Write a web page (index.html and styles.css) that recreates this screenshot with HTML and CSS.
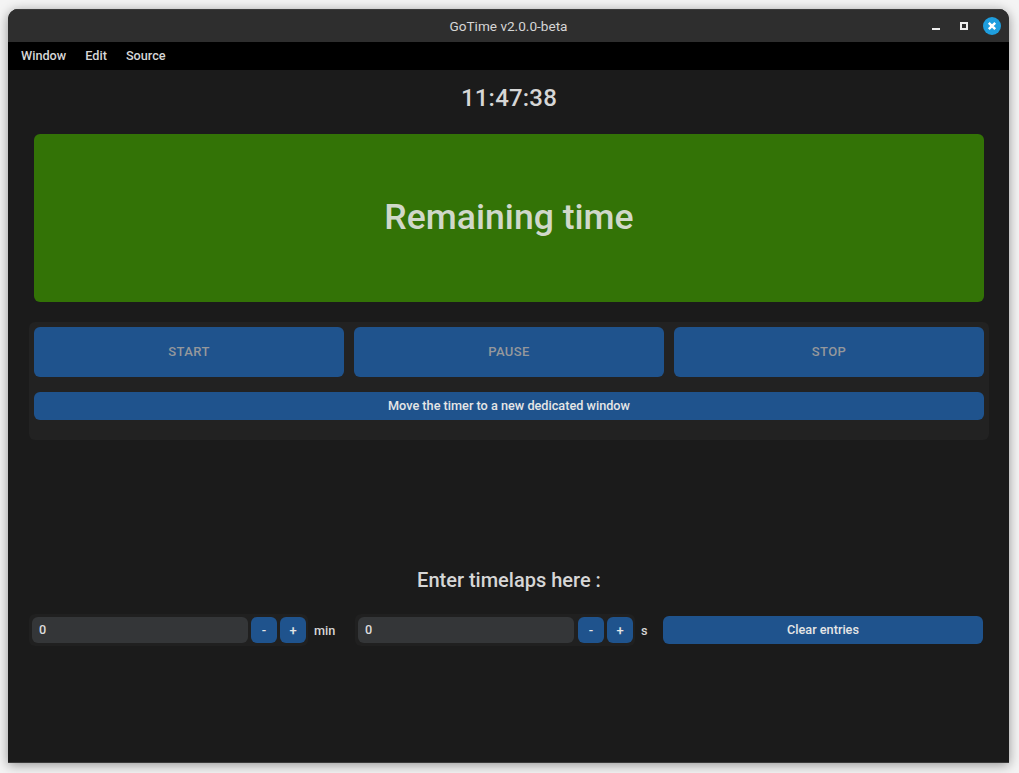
FILE: index.html
```html
<!DOCTYPE html>
<html lang="en">
<head>
    <meta charset="UTF-8">
    <title>GoTime v2.0.0-beta</title>
    <link rel="stylesheet" href="styles.css">
</head>
<body>
    <div class="window">
        <header class="titlebar">
            <span class="title">GoTime v2.0.0-beta</span>
            <div class="controls">
                <span class="ctl-min"></span>
                <span class="ctl-max"></span>
                <span class="ctl-close">
                    <svg width="18" height="18" viewBox="0 0 18 18">
                        <path d="M5.8 5.8l6.4 6.4M12.2 5.8l-6.4 6.4" stroke="#fff" stroke-width="2.4" fill="none"/>
                    </svg>
                </span>
            </div>
        </header>
        <nav class="menubar">
            <span>Window</span>
            <span>Edit</span>
            <span>Source</span>
        </nav>
        <main class="content">
            <div class="clock">11:47:38</div>
            <div class="remaining">Remaining time</div>
            <section class="panel">
                <div class="actions">
                    <button class="btn btn-big" disabled>START</button>
                    <button class="btn btn-big" disabled>PAUSE</button>
                    <button class="btn btn-big" disabled>STOP</button>
                </div>
                <button class="btn btn-wide">Move the timer to a new dedicated window</button>
            </section>
            <h2 class="enter">Enter timelaps here :</h2>
            <div class="entries">
                <div class="spin spin-min">
                    <input class="spin-input" type="text" value="0">
                    <button class="btn btn-step">-</button>
                    <button class="btn btn-step">+</button>
                </div>
                <span class="unit unit-min">min</span>
                <div class="spin spin-sec">
                    <input class="spin-input" type="text" value="0">
                    <button class="btn btn-step">-</button>
                    <button class="btn btn-step">+</button>
                </div>
                <span class="unit unit-sec">s</span>
                <button class="btn btn-clear">Clear entries</button>
            </div>
        </main>
    </div>
</body>
</html>
```

FILE: styles.css
```css
* {
    box-sizing: border-box;
}

html, body {
    margin: 0;
    height: 100%;
}

body {
    padding: 9px 9px 9px 8px;
    background-color: #f4f4f4;
    font-family: Roboto, sans-serif;
    overflow: hidden;
}

.window {
    width: 1001px;
    height: 754px;
    display: flex;
    flex-direction: column;
    background-color: #1b1b1b;
    border-radius: 10px 10px 0 0;
    border-bottom: 1px solid #3a3a3a;
    box-shadow: 0 2px 12px rgba(0, 0, 0, 0.4);
    overflow: hidden;
}

.titlebar {
    height: 33px;
    flex: none;
    display: flex;
    align-items: center;
    justify-content: center;
    position: relative;
    background-color: #2e2e2e;
    border-top: 1px solid #3c3c3c;
}

.title {
    font-size: 13.6px;
    color: #d6d6d6;
}

.controls {
    position: absolute;
    top: 0;
    left: 924px;
    height: 32px;
    display: flex;
    align-items: center;
}

.ctl-min {
    width: 8px;
    height: 2px;
    margin-top: 6px;
    background-color: #eee;
}

.ctl-max {
    width: 8px;
    height: 8px;
    margin-left: 20px;
    margin-top: -1px;
    border: 2px solid #eee;
}

.ctl-close {
    width: 18px;
    height: 18px;
    margin-left: 15px;
    border-radius: 50%;
    background-color: #1f9ede;
    display: flex;
}

.menubar {
    height: 28px;
    flex: none;
    display: flex;
    align-items: center;
    gap: 19px;
    padding-left: 13px;
    padding-bottom: 2px;
    background-color: #000;
    font-size: 12.7px;
    font-weight: 500;
    color: #d6d6d6;
}

.content {
    flex: 1;
    padding: 0 25px 0 26px;
    color: #d6d6d6;
}

.clock {
    height: 56px;
    padding-top: 14px;
    text-align: center;
    font-size: 24px;
    line-height: 28px;
    font-weight: 500;
    letter-spacing: 0.2px;
}

.remaining {
    height: 168px;
    margin-top: 8px;
    padding-bottom: 2px;
    display: flex;
    align-items: center;
    justify-content: center;
    background-color: #337306;
    border-radius: 6px;
    font-size: 35.6px;
    font-weight: 500;
    color: #d0d8ca;
}

.panel {
    height: 118px;
    margin: 20px -5px 0;
    padding: 5px;
    background-color: #222;
    border-radius: 6px;
}

.actions {
    display: grid;
    grid-template-columns: repeat(3, 1fr);
    gap: 10px;
}

.btn {
    border: none;
    padding: 0;
    background-color: #1f538d;
    border-radius: 6px;
    color: #e6e6e6;
    font-family: Roboto, sans-serif;
    font-size: 12.7px;
    font-weight: 500;
}

.btn-big {
    height: 50px;
    padding-bottom: 2px;
    color: #95989c;
    font-size: 13px;
    letter-spacing: 0.4px;
}

.btn-wide {
    width: 100%;
    height: 28px;
    margin-top: 15px;
    padding-bottom: 2px;
}

.enter {
    margin: 127px 0 0;
    text-align: center;
    font-size: 20px;
    line-height: 26px;
    font-weight: 500;
}

.entries {
    margin-top: 21px;
    margin-left: -5px;
    display: flex;
    align-items: center;
}

.spin {
    height: 32px;
    padding: 3px 2px 3px 3px;
    display: flex;
    gap: 3px;
    background-color: #202020;
    border-radius: 6px;
}

.spin-min {
    width: 279px;
}

.spin-sec {
    width: 280px;
}

.spin-sec .spin-input {
    margin-right: 1px;
}

.spin-input {
    flex: 1;
    min-width: 0;
    height: 26px;
    padding: 0 7px 2px;
    border: none;
    background-color: #343638;
    border-radius: 6px;
    color: #dcdcdc;
    font-family: Roboto, sans-serif;
    font-size: 12.7px;
    font-weight: 500;
}

.btn-step {
    width: 26px;
    height: 26px;
    font-size: 13px;
}

.unit {
    font-size: 12.7px;
    font-weight: 500;
    color: #d6d6d6;
}

.unit-min {
    margin-left: 6px;
    width: 41px;
}

.unit-sec {
    margin-left: 6px;
    width: 22px;
}

.btn-clear {
    width: 320px;
    height: 28px;
    padding-bottom: 2px;
}
```
